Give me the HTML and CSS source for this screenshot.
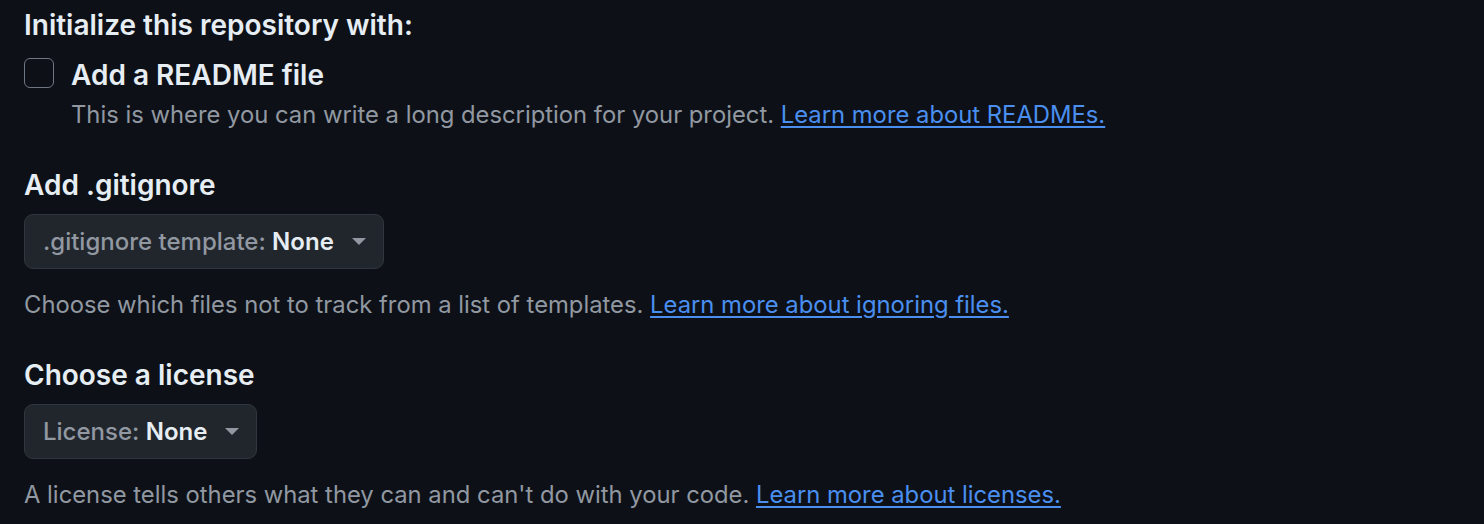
FILE: index.html
```html
<!DOCTYPE html>
<html lang="en">
<head>
<meta charset="utf-8">
<title>Initialize repository</title>
<link rel="stylesheet" href="styles.css">
</head>
<body>
<div class="page">
  <h2 class="heading">Initialize this repository with:</h2>
  <div class="check-row">
    <span class="checkbox"></span>
    <div class="check-text">
      <div class="check-label">Add a README file</div>
      <p class="note note-tight">This is where you can write a long description for your project. <a href="#" class="link">Learn more about READMEs.</a></p>
    </div>
  </div>

  <section class="section">
    <h2 class="heading">Add .gitignore</h2>
    <button class="select-btn"><span class="select-text"><span class="select-label">.gitignore template: </span><span class="select-value">None</span></span><span class="caret"></span></button>
    <p class="note">Choose which files not to track from a list of templates. <a href="#" class="link">Learn more about ignoring files.</a></p>
  </section>

  <section class="section">
    <h2 class="heading">Choose a license</h2>
    <button class="select-btn"><span class="select-text"><span class="select-label">License: </span><span class="select-value">None</span></span><span class="caret"></span></button>
    <p class="note">A license tells others what they can and can't do with your code. <a href="#" class="link">Learn more about licenses.</a></p>
  </section>
</div>
</body>
</html>
```

FILE: styles.css
```css
html, body {
  margin: 0;
  padding: 0;
  background: #0d1117;
}

body {
  font-family: Inter, "Noto Sans", "Liberation Sans", sans-serif;
  color: #e6edf3;
}

.page {
  padding: 4px 24px 0 24px;
}

.heading {
  margin: 0;
  font-size: 28px;
  line-height: 42px;
  font-weight: 600;
  color: #e6edf3;
}

.check-row {
  display: flex;
  align-items: flex-start;
  margin-top: 8px;
}

.checkbox {
  flex: 0 0 auto;
  width: 28px;
  height: 28px;
  margin-top: 4px;
  margin-right: 17px;
  border: 1.5px solid #6e7681;
  border-radius: 6px;
}

.check-label {
  font-size: 28px;
  line-height: 42px;
  font-weight: 600;
}

.note {
  margin: 18px 0 0 0;
  font-size: 23.8px;
  line-height: 36px;
  color: #9198a1;
}

.note-tight {
  margin-top: 1px;
}

.link {
  color: #4a8ff0;
  text-decoration: underline;
  text-underline-offset: 3px;
  text-decoration-thickness: 1.5px;
}

.section {
  margin-top: 31px;
}

.section + .section {
  margin-top: 31px;
}

.select-btn {
  display: flex;
  align-items: center;
  height: 55px;
  margin-top: 8px;
  padding: 0 17px 0 18px;
  background: #21262d;
  border: 1.5px solid #30363d;
  border-radius: 9px;
  font-family: inherit;
  font-size: 24px;
  font-weight: 500;
  color: #e6edf3;
}

.select-text {
  white-space: pre;
}

.select-label {
  color: #9198a1;
}

.select-value {
  font-weight: 600;
  color: #e6edf3;
}

.caret {
  display: inline-block;
  width: 0;
  height: 0;
  margin-left: 18px;
  border-left: 7.5px solid transparent;
  border-right: 7.5px solid transparent;
  border-top: 7.5px solid #9198a1;
}
```
